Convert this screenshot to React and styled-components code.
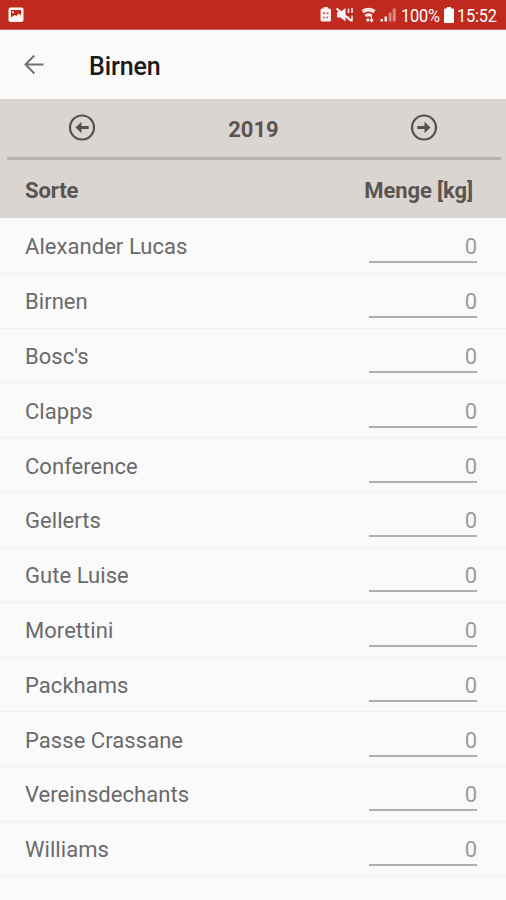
import { createGlobalStyle, styled } from 'styled-components';

const SORTS = [
  { name: 'Alexander Lucas', amount: 0 },
  { name: 'Birnen', amount: 0 },
  { name: "Bosc's", amount: 0 },
  { name: 'Clapps', amount: 0 },
  { name: 'Conference', amount: 0 },
  { name: 'Gellerts', amount: 0 },
  { name: 'Gute Luise', amount: 0 },
  { name: 'Morettini', amount: 0 },
  { name: 'Packhams', amount: 0 },
  { name: 'Passe Crassane', amount: 0 },
  { name: 'Vereinsdechants', amount: 0 },
  { name: 'Williams', amount: 0 },
];

function StatusIcons() {
  return (
    <svg width="78" height="20" viewBox="0 0 78 20" fill="#fff">
      {/* battery saver */}
      <path d="M3.500 2h4.500V3.500h1.500q1.500 0 1.500 1.500v10q0 1.500-1.500 1.500H2Q.5 16.500.5 15V5Q.5 3.500 2 3.500h1.500z" opacity=".93" />
      <path d="M3 8.200h2M6.500 8.200h2M3.500 12.500h1.500M6.500 12.500h1.500" fill="none" stroke="#c94a40" strokeWidth="1.400" />
      <g transform="translate(-1 0)">
        {/* muted */}
        <path d="M18 7h3.500l5-4v13.500l-5-4H18z" opacity=".93" />
        <path d="M17.500 3.500l15 12.500" stroke="#fff" strokeWidth="2" />
        <path d="M29.500 3.500v4.500M29.500 11.500v3.500M33 3v5M33 10.500v6" stroke="#fff" strokeWidth="1.800" opacity=".8" />
        {/* wifi */}
        <path d="M42.500 5q7-4.500 14 0l-2 3.200q-5-3.400-10 0z" opacity=".88" />
        <path d="M45.500 9.700q4-2.800 8 0l-1.800 2.200q-2.200-1.400-4.400 0zM47.500 13.500h2.500v3h-2.500z" opacity=".92" />
        <path d="M52.500 11v5.500M50.700 14.300l1.800 2.200 1.800-2.200" stroke="#fff" strokeWidth="1.200" fill="none" />
        {/* signal */}
        <path d="M61.500 14H64v2.500h-2.500zM65.500 11.500H68v5h-2.500z" opacity=".9" />
        <path d="M69.700 7.500h2.800v9h-2.800zM73.700 3.500h3v13h-3z" opacity=".45" />
      </g>
    </svg>
  );
}

function CircleArrow({ flipped }) {
  return (
    <ArrowSvg $flipped={flipped} width="28" height="28" viewBox="0 0 28 28">
      <circle cx="14" cy="13.500" r="12" fill="none" stroke="#56504e" strokeWidth="2.200" />
      <path d="M7.500 13.500l6-5.700V12h7.200v3h-7.200v4.200z" fill="#56504e" />
    </ArrowSvg>
  );
}

function App() {
  return (
    <>
      <GlobalStyle />
      <Screen>
        <StatusBar>
          <svg width="16" height="16" viewBox="0 0 16 16">
            <rect x=".5" y=".5" width="15" height="14.500" rx="2" fill="#fff" opacity=".95" />
            <path d="M3 3h10v5.500l-2.500-2-2 2.500-2-1L3 10.500z" fill="#bf291e" />
            <circle cx="5" cy="5.200" r="1" fill="#fff" />
          </svg>
          <StatusGroup>
            <StatusIcons />
            <StatusText $width="40px">100%</StatusText>
            <svg width="10" height="16" viewBox="0 0 10 16">
              <path d="M3 0h4v1.500h2q1 0 1 1V15q0 1-1 1H1q-1 0-1-1V2.500q0-1 1-1h2z" fill="#fff" />
            </svg>
            <StatusText $width="41px">15:52</StatusText>
          </StatusGroup>
        </StatusBar>

        <AppBar>
          <BackButton aria-label="Zurück">
            <svg width="20" height="20" viewBox="0 0 20 20" fill="none" stroke="#727272" strokeWidth="2">
              <path d="M19.500 9.500H1.500M10.300.5L1.500 9.500l8.800 9" />
            </svg>
          </BackButton>
          <Title>Birnen</Title>
        </AppBar>

        <TableHead>
          <YearPicker>
            <YearButton aria-label="Vorheriges Jahr"><CircleArrow /></YearButton>
            <Year>2019</Year>
            <YearButton aria-label="Nächstes Jahr"><CircleArrow flipped /></YearButton>
          </YearPicker>
          <Columns>
            <span>Sorte</span>
            <span>Menge [kg]</span>
          </Columns>
        </TableHead>

        <List>
          {SORTS.map(({ name, amount }) => (
            <Row key={name}>
              <Name>{name}</Name>
              <Amount>{amount}</Amount>
            </Row>
          ))}
        </List>
      </Screen>
    </>
  );
}

const GlobalStyle = createGlobalStyle`
    * {
        box-sizing: border-box;
    }

    body {
        margin: 0;
        background-color: #fafafa;
        font-family: Roboto, sans-serif;
    }
`;

const Screen = styled.main`
    width: 506px;
    height: 900px;
    overflow: hidden;
    background-color: #fafafa;
`;

const StatusBar = styled.div`
    display: flex;
    align-items: center;
    justify-content: space-between;
    height: 30px;
    padding: 0 8px;
    background-color: #bf291e;
    border-bottom: 1px solid #cf625a;
`;

const StatusGroup = styled.div`
    display: flex;
    align-items: center;
    gap: 3px;
`;

const StatusText = styled.span`
    width: ${({ $width }) => $width};
    color: #fff;
    font-size: 18px;
    line-height: 20px;
    padding-top: 2px;
    letter-spacing: -0.2px;
    white-space: nowrap;
    transform: scaleX(0.91);
    transform-origin: left;
`;

const AppBar = styled.header`
    display: flex;
    align-items: center;
    height: 69px;
    padding-left: 24px;
`;

const BackButton = styled.button`
    display: flex;
    width: 20px;
    padding: 0;
    border: none;
    background: none;
`;

const Title = styled.h1`
    margin: 4px 0 0 45px;
    color: #1b1b1b;
    font-size: 25px;
    font-weight: 500;
    line-height: 30px;
    letter-spacing: -0.1px;
`;

const TableHead = styled.section`
    height: 119px;
    background-color: #dbd5d1;
    color: #5a5452;
    font-size: 22px;
    font-weight: 700;
`;

const YearPicker = styled.div`
    display: grid;
    grid-template-columns: 150px 1fr 154px;
    align-items: center;
    justify-items: center;
    height: 61px;
    margin: 0 5px 0 7px;
    border-bottom: 3px solid #b9b2af;
`;

const YearButton = styled.button`
    display: flex;
    padding: 0;
    border: none;
    background: none;
`;

const ArrowSvg = styled.svg`
    transform: ${({ $flipped }) => ($flipped ? 'scaleX(-1)' : 'none')};
`;

const Year = styled.span`
    margin-top: 3px;
    padding-left: 3px;
`;

const Columns = styled.div`
    display: flex;
    align-items: center;
    justify-content: space-between;
    height: 58px;
    padding: 2px 33px 0 25px;
    letter-spacing: -0.1px;
`;

const List = styled.ul`
    margin: 1px 0 0;
    padding: 0;
    list-style: none;
`;

const Row = styled.li`
    display: flex;
    justify-content: space-between;
    height: 54.82px;
    padding: 14.3px 29px 0 25px;
    border-bottom: 1px solid #f0f0f0;
    font-size: 22px;
    line-height: 27px;
`;

const Name = styled.span`
    color: #6a6a6a;
    letter-spacing: 0.05px;
`;

const Amount = styled.span`
    width: 108px;
    height: 30px;
    border-bottom: 2px solid #b0b0b0;
    color: #9c9c9c;
    text-align: right;
`;

export default App;
